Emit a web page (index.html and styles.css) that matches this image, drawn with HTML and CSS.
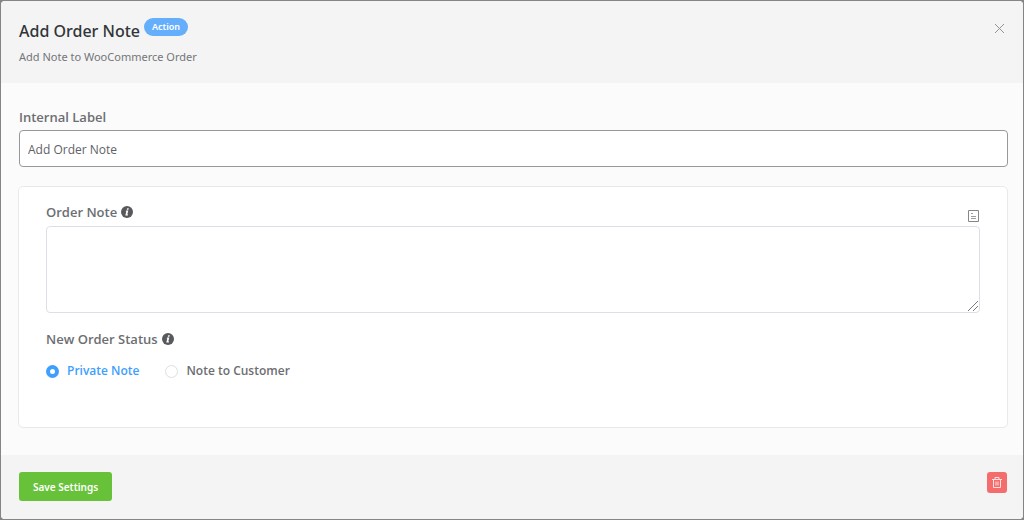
FILE: index.html
```html
<!DOCTYPE html>
<html lang="en">

<head>
  <meta charset="UTF-8" />
  <meta name="viewport" content="width=device-width, initial-scale=1.0" />
  <title>Add Order Note</title>
  <link rel="stylesheet" href="styles.css">
</head>

<body>
  <form class="modal">
    <header class="modal-header">
      <div>
        <div class="title-row">
          <h2>Add Order Note</h2>
          <span class="badge">Action</span>
        </div>
        <p>Add Note to WooCommerce Order</p>
      </div>
      <button type="button" class="close" aria-label="Close">
        <svg width="11" height="11" viewBox="0 0 11 11">
          <path d="M1 1L10 10M10 1L1 10" />
        </svg>
      </button>
    </header>

    <main class="modal-body">
      <label class="label" for="internal-label">Internal Label</label>
      <input type="text" id="internal-label" class="text-input" value="Add Order Note" />

      <section class="card">
        <div class="field-head">
          <div class="label-row">
            <label class="label" for="order-note">Order Note</label>
            <svg class="info" width="12" height="12" viewBox="0 0 12 12">
              <circle cx="6" cy="6" r="6" />
              <path d="M6.2 2.2h1.6l-.4 1.5H5.8zM5 4.6h2.3L6.3 8.6h.8l-.2.9H4.3l1-4H4.8z" />
            </svg>
          </div>
          <button type="button" class="shortcodes" aria-label="Insert shortcode">
            <svg width="11" height="12" viewBox="0 0 11 12">
              <path d="M.5.5h10v11H.5z" />
              <path class="lines" d="M3 3.5h2M3 6.5h5M3 8.5h5" />
            </svg>
          </button>
        </div>
        <div class="textarea-wrap">
          <textarea id="order-note"></textarea>
          <svg class="grip" width="12" height="12" viewBox="0 0 12 12">
            <path d="M1 11L11 1M6 11L11 6" />
          </svg>
        </div>

        <div class="label-row">
          <span class="label" id="status-label">New Order Status</span>
          <svg class="info" width="12" height="12" viewBox="0 0 12 12">
            <circle cx="6" cy="6" r="6" />
            <path d="M6.2 2.2h1.6l-.4 1.5H5.8zM5 4.6h2.3L6.3 8.6h.8l-.2.9H4.3l1-4H4.8z" />
          </svg>
        </div>
        <div class="radios" role="radiogroup" aria-labelledby="status-label">
          <label class="radio"><input type="radio" name="note" checked /><span>Private Note</span></label>
          <label class="radio"><input type="radio" name="note" /><span>Note to Customer</span></label>
        </div>
      </section>
    </main>

    <footer class="modal-footer">
      <button type="submit" class="save">Save Settings</button>
      <button type="button" class="delete" aria-label="Delete">
        <svg width="10" height="11" viewBox="0 0 10 11">
          <path d="M0 2.5h10M3 2.5v-2h4v2M1.5 2.5v8h7v-8M4 4.5v4M6 4.5v4" />
        </svg>
      </button>
    </footer>
  </form>
</body>

</html>
```
FILE: styles.css
```css
* {
  box-sizing: border-box;
}

body {
  margin: 0;
  padding: 1px;
  min-height: 100vh;
  display: flex;
  background-color: #858585;
  font-family: "Open Sans", "Noto Sans", sans-serif;
  font-size: 13px;
  color: #606266;
}

h2,
p {
  margin: 0;
}

button,
input,
textarea {
  font: inherit;
}

button {
  padding: 0;
  border: 0;
  background: none;
  cursor: pointer;
}

svg {
  display: block;
  fill: none;
}

.modal {
  flex: 1;
  display: flex;
  flex-direction: column;
  border-radius: 4px;
  background-color: #fbfbfb;
  overflow: hidden;
}

.modal-header {
  display: flex;
  justify-content: space-between;
  align-items: flex-start;
  padding: 16px 18px 14px;
  background-color: #f4f4f4;
  font-family: "Noto Sans", sans-serif;
}

.title-row {
  display: flex;
  gap: 4px;
}

h2 {
  font-size: 16px;
  line-height: 28px;
  font-weight: 500;
  color: #303539;
}

.badge {
  height: 18px;
  margin-top: 1px;
  padding: 0 8px;
  border-radius: 9px;
  background-color: #64aefc;
  color: #fff;
  font-size: 9px;
  line-height: 18px;
  font-weight: 600;
}

.modal-header p {
  font-size: 11px;
  line-height: 24px;
  color: #73767a;
}

.close {
  margin-top: 6px;
}

.close svg {
  stroke: #909399;
}

.modal-body {
  flex: 1;
  padding: 24px 15px 26px 17px;
}

.label {
  font-size: 13px;
  line-height: 20px;
  font-weight: 600;
  color: #6c6e72;
}

.modal-body > .label {
  display: block;
  margin: 0 1px 3px;
}

.text-input {
  display: block;
  width: calc(100% - 1px);
  height: 37px;
  margin-left: 1px;
  padding: 1px 8px 0;
  border: 1px solid #96989c;
  border-radius: 4px;
  background-color: #fff;
  color: #606266;
  font-size: 12px;
}

.card {
  margin-top: 19px;
  padding: 15px 27px 46px;
  border: 1px solid #e8e9eb;
  border-radius: 5px;
  background-color: #fff;
}

.field-head {
  display: flex;
  justify-content: space-between;
}

.label-row {
  display: flex;
  align-items: center;
  gap: 4px;
}

.info circle {
  fill: #58595c;
}

.info path {
  fill: #fff;
}

.shortcodes {
  padding: 7px 1px 0;
}

.shortcodes svg {
  stroke: #85878a;
}

.shortcodes .lines {
  stroke: #9a9c9f;
}

.textarea-wrap {
  position: relative;
  margin: 4px 0 16px;
}

textarea {
  display: block;
  width: 100%;
  height: 87px;
  border: 1px solid #dcdfe6;
  border-radius: 4px;
  resize: vertical;
}

textarea::-webkit-resizer {
  display: none;
}

.grip {
  position: absolute;
  right: 1px;
  bottom: 1px;
  stroke: #77797c;
  pointer-events: none;
}

.radios {
  display: flex;
  gap: 26px;
  margin-top: 12px;
}

.radio {
  display: flex;
  align-items: center;
  gap: 8px;
  font-size: 12px;
  line-height: 20px;
  font-weight: 600;
  color: #6c6e72;
}

.radio input {
  appearance: none;
  width: 13px;
  height: 13px;
  margin: 0;
  border: 1px solid #dcdfe6;
  border-radius: 50%;
  background-color: #fff;
}

.radio input:checked {
  border: 4px solid #409eff;
}

.radio input:checked + span {
  color: #409eff;
}

.modal-footer {
  display: flex;
  justify-content: space-between;
  align-items: flex-start;
  padding: 17px 16px 18px 18px;
  background-color: #f4f4f4;
}

.save {
  height: 29px;
  padding: 0 14px;
  border-radius: 3px;
  background-color: #67c23a;
  color: #fff;
  font-family: "Noto Sans", sans-serif;
  font-size: 10px;
  font-weight: 600;
}

.delete {
  display: flex;
  align-items: center;
  justify-content: center;
  width: 20px;
  height: 21px;
  border-radius: 3px;
  background-color: #f56c6c;
}

.delete svg {
  stroke: #fde2e2;
}
```
